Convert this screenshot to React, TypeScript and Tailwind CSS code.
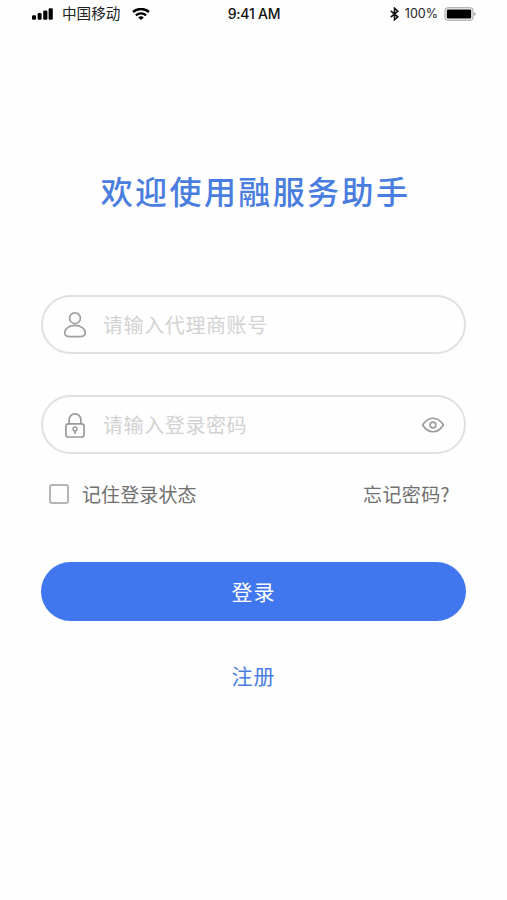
import { useState } from "react";

const SignalIcon = () => (
  <svg className="w-[21px] h-[13px]" viewBox="0 0 21 13" fill="#000">
    <rect x="0" y="7.2" width="4" height="4.6" rx="1.2" />
    <rect x="5.6" y="5" width="4" height="6.8" rx="1.2" />
    <rect x="11.2" y="2.6" width="4.2" height="9.2" rx="1.2" />
    <rect x="16.6" y=".2" width="4.2" height="11.6" rx="1.2" />
  </svg>
);

const WifiIcon = () => (
  <svg className="w-[18px] h-[13px]" viewBox="0 0 18 13" fill="none" stroke="#000">
    <path d="M1 4C5.4 0 12.6 0 17 4" strokeWidth="2.4" />
    <path d="M3.9 7.4c2.900-2.700 7.300-2.700 10.200 0" strokeWidth="2.2" />
    <path d="M9 12 6.200 9.400c1.600-1.400 4-1.400 5.600 0z" fill="#000" stroke="none" />
  </svg>
);

const BluetoothIcon = () => (
  <svg className="w-[9px] h-[14px]" viewBox="0 0 9 14" fill="none" stroke="#111" strokeWidth="1.6">
    <path d="m.8 3.8 7 6L4.5 12.8V1.2l3.3 3-7 6" />
  </svg>
);

const BatteryIcon = () => (
  <svg className="w-[33px] h-[14px]" viewBox="0 0 33 14">
    <rect x="1" y=".8" width="28" height="12.4" rx="2.6" fill="none" stroke="#999" strokeWidth="1" />
    <rect x="2.8" y="2.6" width="24.4" height="8.8" rx="1" fill="#000" />
    <path d="M30.4 5.2c1.5.6 1.5 3 0 3.6z" fill="#777" />
  </svg>
);

const UserIcon = () => (
  <svg className="w-6 h-7" viewBox="0 0 24 28" fill="none" stroke="#a0a0a0" strokeWidth="1.7">
    <circle cx="12" cy="7.2" r="5.4" />
    <path d="M12 14.400c5.800 0 10.300 3.500 10.300 7.400 0 3-2.200 3.800-4.800 3.800h-11c-2.600 0-4.800-.8-4.800-3.800 0-3.900 4.500-7.400 10.300-7.400z" />
  </svg>
);

const LockIcon = () => (
  <svg className="w-6 h-7" viewBox="0 0 24 28" fill="none" stroke="#9a9a9a" strokeWidth="1.7">
    <rect x="2.9" y="12.8" width="18.2" height="13.2" rx="2.6" />
    <path d="M6.1 12.8V8.800a5.900 5.900 0 0 1 11.800 0v4" />
    <circle cx="12" cy="18" r="1.9" strokeWidth="1.5" />
    <path d="M12 19.800v3.200" />
  </svg>
);

const EyeIcon = () => (
  <svg className="w-6 h-4" viewBox="0 0 24 16" fill="none" stroke="#999" strokeWidth="1.6">
    <path d="M1.6 8C4.200 4 7.600 1.200 12 1.200S19.800 4 22.400 8C19.800 12 16.400 14.800 12 14.800S4.200 12 1.600 8z" strokeLinejoin="round" />
    <circle cx="12" cy="8" r="2.9" />
  </svg>
);

const App = () => {
  const [remember, setRemember] = useState(false);
  const [showPassword, setShowPassword] = useState(false);

  return (
    <div className="min-h-screen bg-[#fefefe] font-['Inter','Noto_Sans_CJK_SC',sans-serif]">
      {/* Status bar */}
      <header className="grid grid-cols-3 items-center h-7 pl-8 pr-[30px] text-black">
        <div className="flex items-center">
          <SignalIcon />
          <span className="ml-[9px] mr-3 -mt-px text-[14.6px] leading-none text-[#222] font-['Noto_Sans_CJK_SC',sans-serif]">中国移动</span>
          <WifiIcon />
        </div>
        <div className="pr-px text-center text-sm font-medium leading-none tracking-[-0.2px] text-[#111]">9:41 AM</div>
        <div className="flex items-center justify-end">
          <BluetoothIcon />
          <span className="ml-1.5 mr-1.5 text-[12.5px] leading-none text-[#222]">100%</span>
          <BatteryIcon />
        </div>
      </header>

      <main className="px-[41px] pt-[138px] font-['Noto_Sans_CJK_SC',sans-serif]">
        <h1 className="h-12 pl-1 text-center text-[32px] leading-[48px] tracking-[2.4px] font-medium text-[#4a7de0]">
          欢迎使用融服务助手
        </h1>

        <form className="mt-[81px]" onSubmit={(e) => e.preventDefault()}>
          <label className="flex items-center h-[59px] rounded-full border-2 border-[#e0e0e0] pl-5 pr-[19px]">
            <UserIcon />
            <input
              type="text"
              placeholder="请输入代理商账号"
              className="ml-4 mt-px min-w-0 flex-1 text-[20px] tracking-[0.6px] text-[#666] placeholder:text-[#d2d2d2] outline-none"
            />
          </label>

          <div className="mt-[41px] flex items-center h-[59px] rounded-full border-2 border-[#e0e0e0] pl-5 pr-[19px]">
            <LockIcon />
            <input
              type={showPassword ? "text" : "password"}
              placeholder="请输入登录密码"
              className="ml-4 mt-px min-w-0 flex-1 text-[20px] tracking-[0.6px] text-[#666] placeholder:text-[#d2d2d2] outline-none"
            />
            <button type="button" onClick={() => setShowPassword(!showPassword)}>
              <EyeIcon />
            </button>
          </div>

          <div className="mt-[26px] flex items-center justify-between h-7 pl-2 pr-4 text-[19px] leading-7 text-[#707070]">
            <label className="flex items-center">
              <input
                type="checkbox"
                checked={remember}
                onChange={(e) => setRemember(e.target.checked)}
                className="appearance-none w-5 h-5 rounded-[3px] border-2 border-[#b4b4b4] checked:bg-[#4177ee]"
              />
              <span className="ml-[13px] tracking-[0.1px]">记住登录状态</span>
            </label>
            <a href="#" className="tracking-[0.4px]">忘记密码?</a>
          </div>

          <button
            type="submit"
            className="mt-[54px] block w-full h-[59px] rounded-full bg-[#4177ee] text-[21px] tracking-[1px] text-white"
          >
            登录
          </button>
        </form>

        <a href="#" className="mt-[38px] block text-center text-[21px] leading-8 tracking-[1px] text-[#4a7de0]">
          注册
        </a>
      </main>
    </div>
  );
};

export default App;
